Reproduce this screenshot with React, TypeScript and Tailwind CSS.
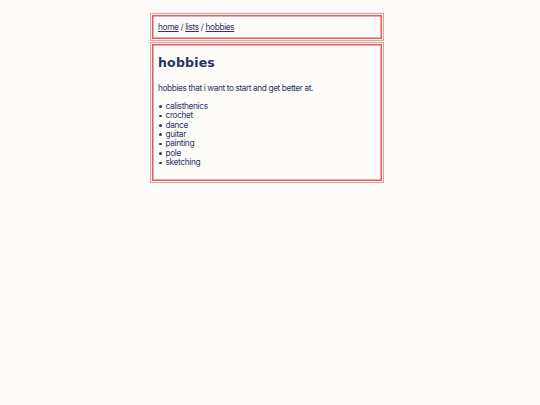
import React from "react";

export default function App() {
  const items = ["calisthenics", "crochet", "dance", "guitar", "painting", "pole", "sketching"];
  const box =
    "border border-[#f29a9a] shadow-[inset_0_0_0_1px_#fcfbf8,inset_0_0_0_2.5px_#e45b5b]";
  return (
    <div className="min-h-[405px] w-full bg-[#fcfbf8] text-[#2d3863]" style={{ fontFamily: "Inter, 'Noto Sans', sans-serif" }}>
      <div className="w-[234px] pt-[13px] ml-[150px]">
        <header className={`${box} h-[28px] flex items-center px-[7px]`}>
          <nav className="text-[8.3px] tracking-[-0.35px] leading-none">
            <a className="underline" href="#">home</a> / <a className="underline" href="#">lists</a> / <a className="underline" href="#">hobbies</a>
          </nav>
        </header>
        <main className={`${box} mt-[1px] h-[141px] px-[7px] pt-[14px]`}>
          <h1 className="text-[12.5px] font-bold tracking-[0.2px] text-[#27325e] leading-none mb-[14px]" style={{ fontFamily: "'DejaVu Sans', sans-serif" }}>hobbies</h1>
          <p className="text-[8.3px] tracking-[-0.4px] leading-none mb-[10px]">hobbies that i want to start and get better at.</p>
          <ul className="text-[8.3px] tracking-[-0.35px] leading-[9.4px]">
            {items.map((i) => (
              <li key={i} className="flex items-center">
                <span className="w-[2.5px] h-[2.5px] rounded-full bg-[#2d3863] ml-[1px] mr-[4px] shrink-0" />
                <span>{i}</span>
              </li>
            ))}
          </ul>
        </main>
      </div>
    </div>
  );
}
